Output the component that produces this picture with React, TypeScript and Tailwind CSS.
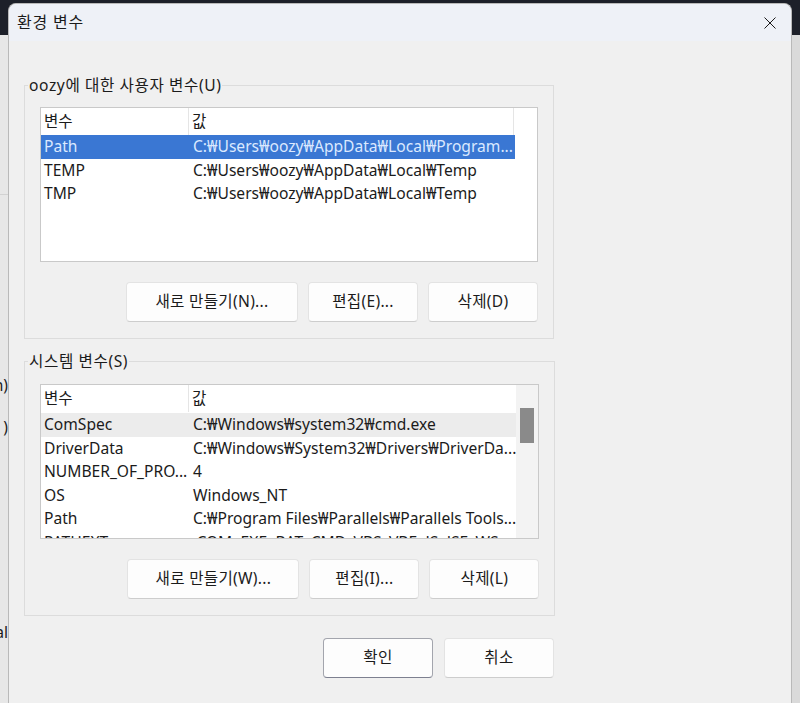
import React from 'react';

const font = "font-['Noto_Sans','Noto_Sans_CJK_KR',sans-serif]";

const userVars = [
  { name: 'Path', value: 'C:₩Users₩oozy₩AppData₩Local₩Program...' },
  { name: 'TEMP', value: 'C:₩Users₩oozy₩AppData₩Local₩Temp' },
  { name: 'TMP', value: 'C:₩Users₩oozy₩AppData₩Local₩Temp' },
];

const systemVars = [
  { name: 'ComSpec', value: 'C:₩Windows₩system32₩cmd.exe' },
  { name: 'DriverData', value: 'C:₩Windows₩System32₩Drivers₩DriverDa...' },
  { name: 'NUMBER_OF_PRO...', value: '4' },
  { name: 'OS', value: 'Windows_NT' },
  { name: 'Path', value: 'C:₩Program Files₩Parallels₩Parallels Tools...' },
  { name: 'PATHEXT', value: '.COM;.EXE;.BAT;.CMD;.VBS;.VBE;.JS;.JSE;.WS...' },
];

function Button({ label, width, isDefault }: { label: string; width: string; isDefault?: boolean }) {
  return (
    <div
      className={`${width} h-[40px] flex items-center justify-center rounded-[4px] bg-[#fdfdfd] border tracking-[0.3px] ${
        isDefault ? 'border-[#a3a5ad] border-b-[#7d8090]' : 'border-[#e3e3e3] border-b-[#cdcdcd]'
      }`}
    >
      {label}
    </div>
  );
}

function VarList({
  rows,
  selected,
  hover,
  scroll,
}: {
  rows: { name: string; value: string }[];
  selected?: number;
  hover?: number;
  scroll?: boolean;
}) {
  return (
    <div className="h-[155px] border border-[#c9c9c9] bg-white flex overflow-hidden">
      <div className="flex-1 flex flex-col min-w-0">
        {/* header */}
        <div className={`${scroll ? 'h-[28px] pb-[1px]' : 'h-[27px]'} shrink-0 flex`}>
          <div className="w-[148px] pl-[3px] flex items-center border-r border-[#e5e5e5]">변수</div>
          <div className={`w-[325px] pl-[3px] flex items-center ${scroll ? '' : 'border-r border-[#e5e5e5]'}`}>값</div>
          {!scroll && <div className="flex-1" />}
        </div>
        {rows.map((r, i) => (
          <div
            key={i}
            className={`h-[23.6px] shrink-0 flex items-center whitespace-nowrap ${
              i === selected ? 'bg-[#3a77d3] text-[#dbe9ff]' : i === hover ? 'bg-[#ececec]' : ''
            } ${scroll ? 'w-full' : 'w-[474px]'}`}
          >
            <div className="w-[149px] pl-[3px] overflow-hidden">{r.name}</div>
            <div className="flex-1 pl-[3px] overflow-hidden">{r.value}</div>
          </div>
        ))}
      </div>
      {scroll && (
        <div className="w-[22px] shrink-0 bg-[#f3f3f3] flex justify-center">
          <div className="w-[14px] h-[35px] mt-[23px] bg-[#8a8a8a]" />
        </div>
      )}
    </div>
  );
}

function Group({ title, children }: { title: string; children: React.ReactNode }) {
  return (
    <fieldset className="w-[530px] border border-[#dcdcdc] px-[15px] pb-[16px]">
      <legend className="-ml-[12px] px-[1px] leading-[20px] tracking-[0.6px]">{title}</legend>
      {children}
    </fieldset>
  );
}

export default function App() {
  return (
    <div className={`w-[800px] h-[703px] overflow-hidden flex bg-[#1d2029] text-[15.6px] text-[#1b1b1b] ${font}`}>
      {/* window behind, left edge */}
      <div className="w-[8px] shrink-0 flex flex-col">
        <div className="h-[35px] shrink-0" />
        <div className="flex-1 bg-[#e7e7e7] flex flex-col overflow-hidden leading-[20px]">
          <div className="h-px mt-[159px] bg-[#d2d2d2]" />
          <div className="flex justify-end whitespace-nowrap mt-[180px]">ation)</div>
          <div className="flex justify-end whitespace-nowrap mt-[22px]">)</div>
          <div className="flex justify-end whitespace-nowrap mt-[185px]">Local</div>
        </div>
      </div>

      {/* dialog */}
      <div className="w-[784px] shrink-0 mt-[3px] rounded-t-[8px] bg-[#f0f0f0] border-x border-t border-[#b9b9b9] flex flex-col overflow-hidden">
        <div className="h-[37px] shrink-0 bg-[#eef1f7] flex items-center justify-between pl-[8px] pr-[15px]">
          <span className="text-[16px] tracking-[0.8px] -mt-[1px]">환경 변수</span>
          <svg width="12" height="12" viewBox="0 0 12 12" className="mt-[1px]">
            <path d="M0.5 0.5 L11.5 11.5 M11.5 0.5 L0.5 11.5" stroke="#1b1b1b" strokeWidth="1" />
          </svg>
        </div>

        <div className="pl-[15px] pt-[34px] flex flex-col">
          <Group title="oozy에 대한 사용자 변수(U)">
            <div className="mt-[12px]">
              <VarList rows={userVars} selected={0} />
            </div>
            <div className="mt-[20px] flex justify-end gap-[10px]">
              <Button label="새로 만들기(N)..." width="w-[172px]" />
              <Button label="편집(E)..." width="w-[110px]" />
              <Button label="삭제(D)" width="w-[110px]" />
            </div>
          </Group>

          <div className="mt-[12px]">
            <Group title="시스템 변수(S)">
              <div className="mt-[13px]">
                <VarList rows={systemVars} hover={0} scroll />
              </div>
              <div className="mt-[20px] flex justify-end gap-[10px]">
                <Button label="새로 만들기(W)..." width="w-[172px]" />
                <Button label="편집(I)..." width="w-[110px]" />
                <Button label="삭제(L)" width="w-[110px]" />
              </div>
            </Group>
          </div>

          <div className="w-[530px] mt-[22px] flex justify-end gap-[11px]">
            <Button label="확인" width="w-[110px]" isDefault />
            <Button label="취소" width="w-[110px]" />
          </div>
        </div>
      </div>

      {/* window behind, right edge */}
      <div className="w-[8px] shrink-0 flex flex-col">
        <div className="h-[35px] shrink-0" />
        <div className="flex-1 bg-[#dadada]" />
      </div>
    </div>
  );
}
